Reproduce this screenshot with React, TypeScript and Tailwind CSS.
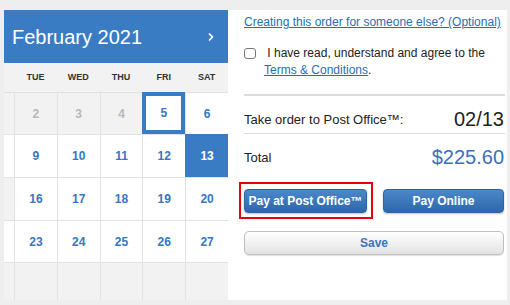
import { ChevronRight } from "lucide-react";

type Cell = { label?: string; kind: "off" | "day" | "picked" | "chosen" | "empty" };

// each week: partial monday column, then tue..sat
const weeks: { mon: "off" | "day"; days: Cell[]; h: string }[] = [
  {
    mon: "off",
    h: "h-[42px]",
    days: [
      { label: "2", kind: "off" },
      { label: "3", kind: "off" },
      { label: "4", kind: "off" },
      { label: "5", kind: "picked" },
      { label: "6", kind: "day" },
    ],
  },
  {
    mon: "day",
    h: "h-[43px]",
    days: [
      { label: "9", kind: "day" },
      { label: "10", kind: "day" },
      { label: "11", kind: "day" },
      { label: "12", kind: "day" },
      { label: "13", kind: "chosen" },
    ],
  },
  {
    mon: "off",
    h: "h-[43px]",
    days: [
      { label: "16", kind: "day" },
      { label: "17", kind: "day" },
      { label: "18", kind: "day" },
      { label: "19", kind: "day" },
      { label: "20", kind: "day" },
    ],
  },
  {
    mon: "day",
    h: "h-[42px]",
    days: [
      { label: "23", kind: "day" },
      { label: "24", kind: "day" },
      { label: "25", kind: "day" },
      { label: "26", kind: "day" },
      { label: "27", kind: "day" },
    ],
  },
  {
    mon: "off",
    h: "h-[38px]",
    days: [
      { kind: "empty" },
      { kind: "empty" },
      { kind: "empty" },
      { kind: "empty" },
      { kind: "empty" },
    ],
  },
];

const cellStyle: Record<Cell["kind"], string> = {
  off: "bg-[#f2f2f2] text-[#b9b9b9] border-t border-l border-[#e2e2e2]",
  day: "bg-white text-[#3677c0] border-t border-l border-[#e2e2e2]",
  picked: "bg-white text-[#3677c0] border-4 border-[#3a7cc4]",
  chosen: "bg-[#3a7cc4] text-white border-t border-l border-[#3a7cc4]",
  empty: "bg-[#f2f2f2] border-t border-l border-[#e2e2e2]",
};

function Calendar() {
  return (
    <div className="w-[224px] flex flex-col">
      {/* month header */}
      <div className="h-[53px] bg-[#3a7cc4] flex items-center justify-between pl-[8px] pr-[11px] text-white">
        <span className="text-[20px] leading-none">February 2021</span>
        <ChevronRight size={12} strokeWidth={3.5} />
      </div>

      {/* weekday names */}
      <div className="h-[29px] bg-[#f2f2f2] grid grid-cols-[10px_repeat(5,1fr)] items-center text-[9px] font-bold text-[#333]">
        <span />
        {["TUE", "WED", "THU", "FRI", "SAT"].map((d) => (
          <span key={d} className="text-center">
            {d}
          </span>
        ))}
      </div>

      {/* weeks */}
      {weeks.map((w, i) => (
        <div key={i} className={`grid grid-cols-[10px_repeat(5,1fr)] ${w.h}`}>
          <div
            className={`border-t border-[#e2e2e2] ${w.mon === "off" ? "bg-[#f2f2f2]" : "bg-white"}`}
          />
          {w.days.map((c, j) => (
            <div
              key={j}
              className={`flex items-center justify-center text-[12px] font-bold ${cellStyle[c.kind]}`}
            >
              {c.label}
            </div>
          ))}
        </div>
      ))}
    </div>
  );
}

function Checkout() {
  return (
    <div className="flex-1 bg-white pl-[16px] pr-[2px] pt-[4px] text-[12px] leading-[17px] text-[#222]">
      <a className="text-[#2a6db5] underline">
        Creating this order for someone else? (Optional)
      </a>

      <div className="mt-[14px] flex">
        <span className="mt-[3px] w-[12px] h-[11px] rounded-[3px] border border-[#777] bg-white shrink-0" />
        <div className="ml-[8px]">
          <div>&nbsp;I have read, understand and agree to the</div>
          <div>
            <a className="text-[#2a6db5] underline">Terms &amp; Conditions</a>.
          </div>
        </div>
      </div>

      <div className="mt-[15px] h-[2px] bg-[#dddddd]" />

      <div className="mt-[11px] h-[24px] flex items-center justify-between">
        <span className="text-[13px]">Take order to Post Office™:</span>
        <span className="text-[20px] leading-none pr-[1px]">02/13</span>
      </div>

      <div className="mt-[2px] h-px bg-[#dddddd]" />

      <div className="mt-[11px] h-[24px] flex items-center justify-between">
        <span className="text-[13px]">Total</span>
        <span className="text-[20px] leading-none text-[#3a6fc0] pr-[1px]">$225.60</span>
      </div>

      <div className="mt-[20px] flex gap-[16px]">
        <div className="relative">
          <button className="w-[123px] h-[24px] rounded-[4px] border border-[#2c64a6] bg-gradient-to-b from-[#4b88ca] to-[#2d67aa] text-white font-bold text-[12px] shadow-[0_1px_2px_rgba(0,0,0,0.25)]">
            Pay at Post Office™
          </button>
          <span className="absolute -left-[5px] -top-[7px] -right-[6px] -bottom-[6px] border-2 border-[#e8000b]" />
        </div>
        <button className="w-[121px] h-[24px] rounded-[4px] border border-[#2c64a6] bg-gradient-to-b from-[#4b88ca] to-[#2d67aa] text-white font-bold text-[12px] shadow-[0_1px_2px_rgba(0,0,0,0.25)]">
          Pay Online
        </button>
      </div>

      <button className="mt-[18px] w-[260px] h-[24px] rounded-[5px] border border-[#bdbdbd] bg-gradient-to-b from-white to-[#e3e3e3] text-[#3a75c0] font-bold text-[12px] shadow-[0_1px_1px_rgba(0,0,0,0.12)]">
        Save
      </button>
    </div>
  );
}

export default function App() {
  return (
    <div
      className="w-[510px] h-[305px] bg-[#eeeeee] pt-[10px] pl-[4px] pr-[3px] pb-[5px] flex overflow-hidden"
      style={{ fontFamily: '"Liberation Sans", Arial, sans-serif' }}
    >
      <Calendar />
      <Checkout />
    </div>
  );
}
